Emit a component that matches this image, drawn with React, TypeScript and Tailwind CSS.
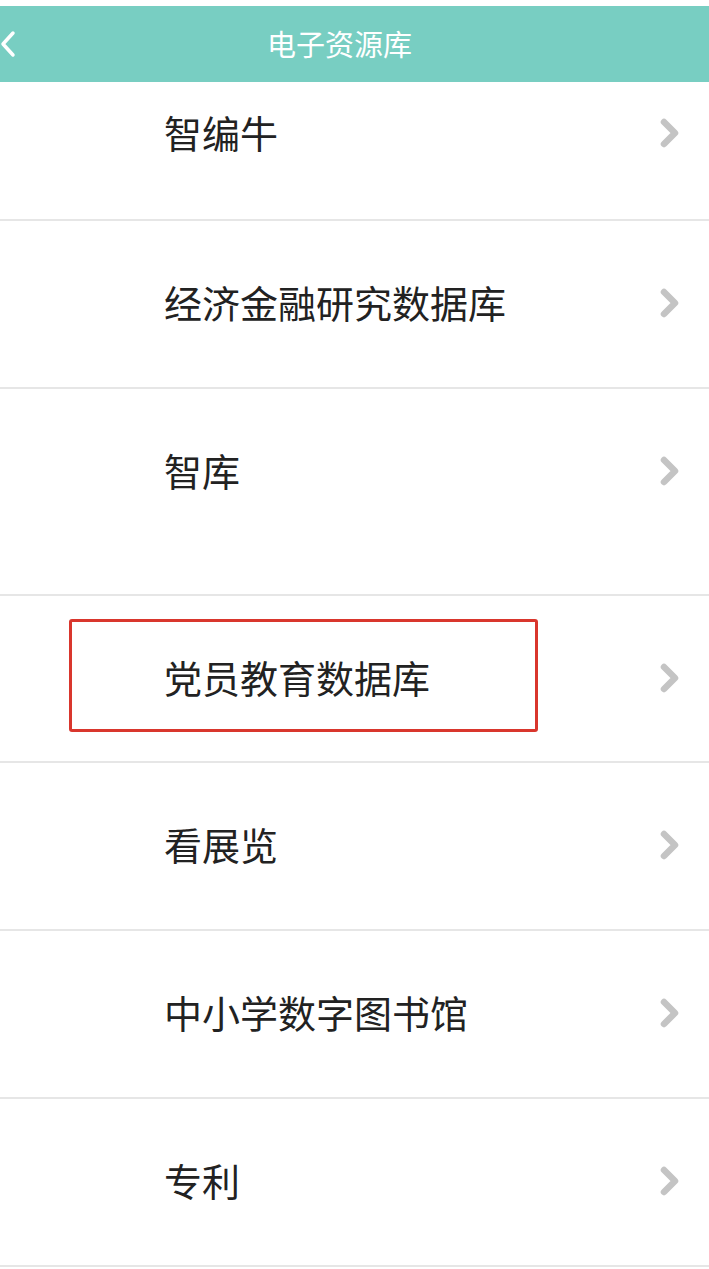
const rows = [
  { name: "智编牛", cls: "h-[139px] pb-[34px]" },
  { name: "经济金融研究数据库", cls: "h-[168px]" },
  { name: "智库", cls: "h-[207px] pb-[39px]" },
  { name: "党员教育数据库", cls: "h-[167px]", marked: true },
  { name: "看展览", cls: "h-[168px]" },
  { name: "中小学数字图书馆", cls: "h-[168px]" },
  { name: "专利", cls: "h-[168px]" },
];

function Chevron() {
  return (
    <svg width="24" height="32" viewBox="0 0 24 32" className="shrink-0 mt-[-2px]">
      <path
        d="M6 5 L17 16 L6 27"
        fill="none"
        stroke="#c4c4c4"
        strokeWidth="6.5"
        strokeLinecap="round"
        strokeLinejoin="round"
      />
    </svg>
  );
}

export default function App() {
  return (
    <div
      className="w-[709px] min-h-[1269px] bg-white pt-[6px]"
      style={{ fontFamily: '"Noto Sans CJK SC", "Noto Sans", sans-serif' }}
    >
      <header className="relative h-[76px] bg-[#78cec2] flex items-center justify-center">
        <svg width="16" height="28" viewBox="0 0 16 28" className="absolute left-0 top-[24px]">
          <path d="M13 3 L3 14 L13 25" fill="none" stroke="#ffffff" strokeWidth="3.5" strokeLinecap="round" strokeLinejoin="round" />
        </svg>
        <h1 className="text-[29px] leading-none text-white pr-[30px] mt-[-2px]">电子资源库</h1>
      </header>

      <ul>
        {rows.map((r) => (
          <li
            key={r.name}
            className={`relative flex items-center justify-between border-b-2 border-[#e6e6e6] pl-[164px] pr-[27px] ${r.cls}`}
          >
            <span className="text-[38px] leading-none text-[#222222] mt-[-4px]">{r.name}</span>
            <Chevron />
            {r.marked && (
              <div className="absolute left-[69px] top-[23px] w-[469px] h-[113px] border-[3px] border-[#d9362d] rounded-[3px]" />
            )}
          </li>
        ))}
      </ul>
    </div>
  );
}
